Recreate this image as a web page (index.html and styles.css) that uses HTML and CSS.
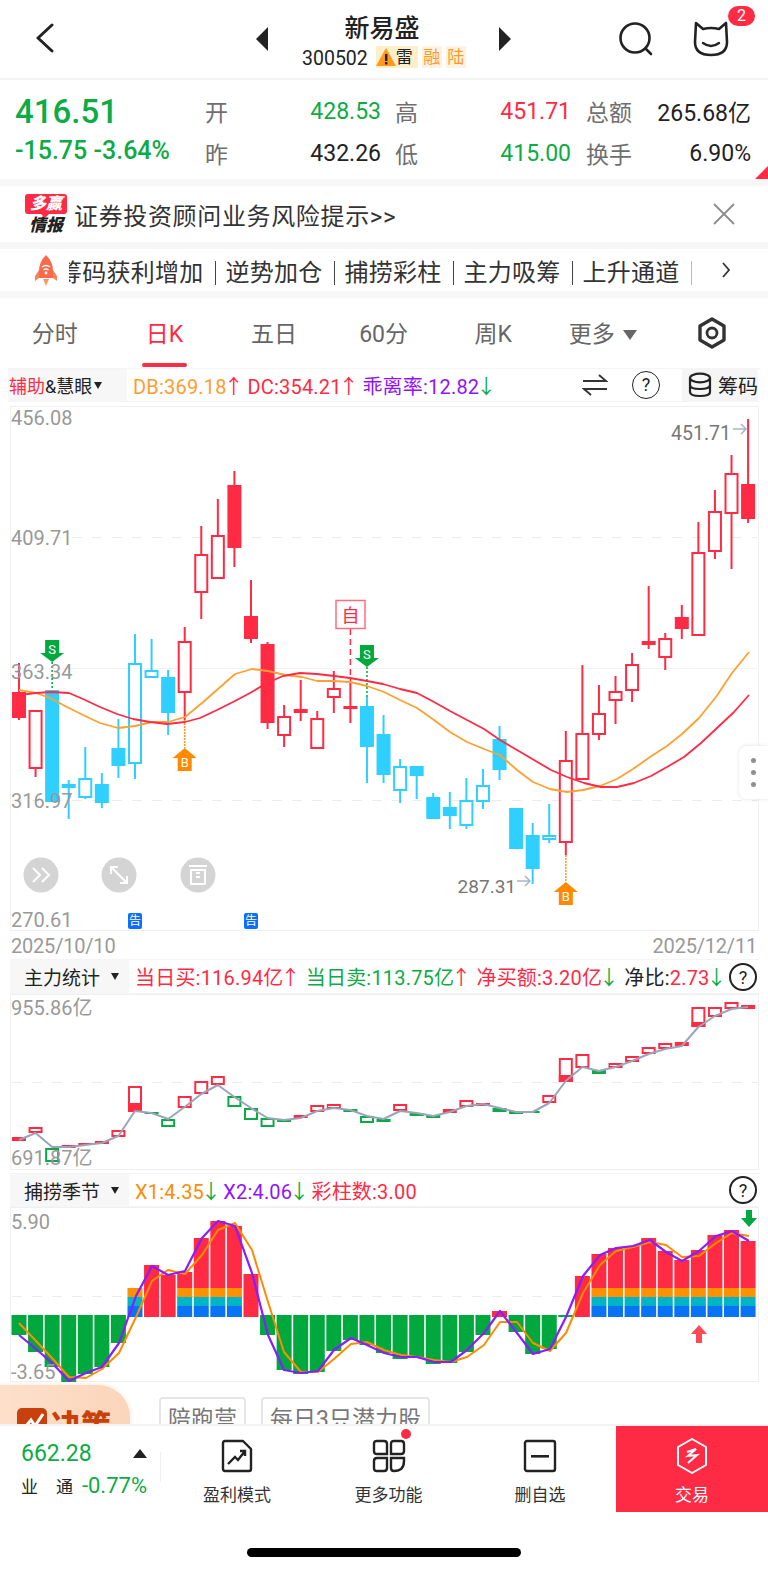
FILE: index.html
```html
<!DOCTYPE html>
<html lang="zh-CN">
<head>
    <meta charset="UTF-8">
    <meta name="viewport" content="width=device-width, initial-scale=1.0">
    <title>新易盛</title>
    <link rel="stylesheet" href="styles.css">
</head>
<body>

    <header class="top">
        <svg class="back" width="20" height="30" viewBox="0 0 20 30"><polyline points="17,2 3,15 17,28" fill="none" stroke="#222" stroke-width="3" stroke-linecap="round" stroke-linejoin="round"/></svg>
        <div class="tri tri-left"></div>
        <div class="name">
            <div class="name-title">新易盛</div>
            <div class="name-sub">
                <span class="code">300502</span>
                <span class="tag tag-warn">
                    <svg width="20" height="20" viewBox="0 0 20 20"><path d="M10 1 L20 19 L0 19 Z" fill="#ff9a1f"/><rect x="9" y="7" width="2.4" height="7" fill="#222"/><rect x="9" y="15" width="2.4" height="2.4" fill="#222"/></svg>雷
                </span>
                <span class="tag">融</span>
                <span class="tag">陆</span>
            </div>
        </div>
        <div class="tri tri-right"></div>
        <svg class="search" width="36" height="36" viewBox="0 0 36 36"><circle cx="17" cy="17" r="14.5" fill="none" stroke="#222" stroke-width="2.6"/><line x1="28" y1="28" x2="33" y2="33" stroke="#222" stroke-width="2.6" stroke-linecap="round"/></svg>
        <div class="cat">
            <svg width="36" height="36" viewBox="0 0 36 36"><path d="M3 2 L10 8 Q18 6 26 8 L33 2 L34 21 Q34 34 18 34 Q2 34 2 21 Z" fill="none" stroke="#222" stroke-width="2.6" stroke-linejoin="round"/><path d="M10 22 Q18 28 26 22" fill="none" stroke="#222" stroke-width="2.4" stroke-linecap="round"/></svg>
            <span class="badge">2</span>
        </div>
    </header>

    <section class="stats">
        <div class="price">
            <div class="price-now">416.51</div>
            <div class="price-chg">-15.75 -3.64%</div>
        </div>
        <div class="stat-grid">
            <span class="lbl">开</span><span class="val green">428.53</span>
            <span class="lbl lbl-mid">高</span><span class="val red">451.71</span>
            <span class="lbl lbl-end">总额</span><span class="val">265.68亿</span>
            <span class="lbl">昨</span><span class="val">432.26</span>
            <span class="lbl lbl-mid">低</span><span class="val green">415.00</span>
            <span class="lbl lbl-end">换手</span><span class="val">6.90%</span>
        </div>
        <div class="corner"></div>
    </section>

    <section class="banner">
        <div class="logo">
            <div class="logo-top">多赢</div>
            <div class="logo-bot">情报</div>
        </div>
        <div class="banner-text">证券投资顾问业务风险提示&gt;&gt;</div>
        <svg class="close" width="24" height="24" viewBox="0 0 24 24"><path d="M2 2 L22 22 M22 2 L2 22" stroke="#8c8c8c" stroke-width="1.8"/></svg>
    </section>

    <section class="ticker">
        <svg class="rocket" width="26" height="32" viewBox="0 0 26 32">
            <path d="M13 1 Q20 8 20 17 L20 24 L6 24 L6 17 Q6 8 13 1 Z" fill="#fa6a4a"/>
            <path d="M6 16 L2 22 L2 27 L6 24 Z M20 16 L24 22 L24 27 L20 24 Z" fill="#f7845f"/>
            <path d="M10 25 L16 25 L13 32 Z" fill="#fb9a63"/>
            <path d="M9 13 Q13 10 17 13 M10.5 16 Q13 14 15.5 16" fill="none" stroke="#fff" stroke-width="1.3"/>
            <circle cx="13" cy="19" r="1.4" fill="#fff"/>
        </svg>
        <div class="ticker-clip">
            <div class="ticker-text">筹码获利增加<i></i>逆势加仓<i></i>捕捞彩柱<i></i>主力吸筹<i></i>上升通道<i></i></div>
        </div>
        <svg class="chev" width="10" height="18" viewBox="0 0 10 18"><polyline points="2,2 8,9 2,16" fill="none" stroke="#333" stroke-width="1.8"/></svg>
    </section>

    <nav class="tabs">
        <div class="tab">分时</div>
        <div class="tab on">日K</div>
        <div class="tab">五日</div>
        <div class="tab">60分</div>
        <div class="tab">周K</div>
        <div class="tab">更多<span class="tab-arrow"></span></div>
        <div class="tab">
            <svg width="30" height="32" viewBox="0 0 30 32"><path d="M15 2 L27 9 L27 23 L15 30 L3 23 L3 9 Z" fill="none" stroke="#333" stroke-width="3.4" stroke-linejoin="round"/><circle cx="15" cy="16" r="5" fill="none" stroke="#333" stroke-width="2.8"/></svg>
        </div>
    </nav>

    <div class="ihead">
        <div class="ihead-name"><span class="red">辅助</span>&amp;慧眼<span class="mini-arrow"></span></div>
        <div class="ihead-vals">
            <span class="orange">DB:369.18<b class="red">↑</b></span>
            <span class="red">DC:354.21<b>↑</b></span>
            <span class="purple">乖离率:12.82<b class="green">↓</b></span>
        </div>
        <svg class="swap" width="26" height="24" viewBox="0 0 26 24"><path d="M1 8 L24 8 L17 2 M25 16 L2 16 L9 22" fill="none" stroke="#333" stroke-width="1.8"/></svg>
        <span class="help help-small">?</span>
        <div class="chip">
            <svg width="24" height="26" viewBox="0 0 24 26"><ellipse cx="12" cy="6" rx="10" ry="4.4" fill="none" stroke="#222" stroke-width="2.2"/><path d="M2 6 V20 Q2 24 12 24 Q22 24 22 20 V6 M2 13 Q2 17 12 17 Q22 17 22 13" fill="none" stroke="#222" stroke-width="2.2"/></svg>
            筹码
        </div>
    </div>

    <svg id="kline" class="chart" width="768" height="529" viewBox="0 402 768 529"></svg>

    <div class="dates"><span>2025/10/10</span><span>2025/12/11</span></div>

    <div class="ihead ihead-sub">
        <div class="ihead-name name-wide">主力统计<span class="mini-arrow"></span></div>
        <div class="ihead-vals">
            <span class="red">当日买:116.94亿<b>↑</b></span>
            <span class="green">当日卖:113.75亿<b class="red">↑</b></span>
            <span class="red">净买额:3.20亿<b class="green">↓</b></span>
            <span class="ink">净比:<i class="red">2.73</i><b class="green">↓</b></span>
        </div>
        <span class="help">?</span>
    </div>

    <svg id="flow" class="chart" width="768" height="176" viewBox="0 994 768 176"></svg>

    <div class="ihead ihead-sub ihead-third">
        <div class="ihead-name name-wide">捕捞季节<span class="mini-arrow"></span></div>
        <div class="ihead-vals">
            <span class="orange-deep">X1:4.35<b class="green">↓</b></span>
            <span class="purple">X2:4.06<b class="green">↓</b></span>
            <span class="red">彩柱数:3.00</span>
        </div>
        <span class="help">?</span>
    </div>

    <svg id="season" class="chart" width="768" height="175" viewBox="0 1207 768 175"></svg>

    <div class="promo">
        <div class="promo-tab">
            <svg width="30" height="30" viewBox="0 0 30 30"><rect width="30" height="30" rx="5" fill="#c8410c"/><path d="M4 24 L14 12 L18 18 L26 6" fill="none" stroke="#fff" stroke-width="3"/></svg>
            决策
        </div>
        <div class="promo-btn">陪跑营</div>
        <div class="promo-btn">每日3只潜力股</div>
    </div>

    <footer class="bar">
        <div class="index">
            <div class="index-row">
                <span class="index-val">662.28</span>
                <span class="index-up"></span>
            </div>
            <div class="index-row">
                <span class="index-name"><span>业</span><span>通</span></span>
                <span class="index-chg">-0.77%</span>
            </div>
        </div>
        <div class="tool">
            <svg width="34" height="34" viewBox="0 0 34 34"><path d="M3 4 Q3 2 5 2 L23 2 L31 10 L31 30 Q31 32 29 32 L5 32 Q3 32 3 30 Z" fill="none" stroke="#222" stroke-width="2.4" stroke-linejoin="round"/><path d="M8 25 L15 18 L18 21 L25 12 M20 12 L25 12 L25 17" fill="none" stroke="#222" stroke-width="2.4"/></svg>
            <span>盈利模式</span>
        </div>
        <div class="tool">
            <svg width="34" height="34" viewBox="0 0 34 34"><g fill="none" stroke="#222" stroke-width="2.4"><path d="M5 2 H12 Q15 2 15 5 V15 H5 Q2 15 2 12 V5 Q2 2 5 2 Z"/><path d="M22 2 H29 Q32 2 32 5 V12 Q32 15 29 15 H19 V5 Q19 2 22 2 Z"/><path d="M5 19 H15 V29 Q15 32 12 32 H5 Q2 32 2 29 V22 Q2 19 5 19 Z"/><path d="M19 19 H32 V22 Q32 32 22 32 Q19 32 19 29 Z"/></g></svg>
            <span>更多功能</span>
            <i class="dot"></i>
        </div>
        <div class="tool">
            <svg width="34" height="34" viewBox="0 0 34 34"><rect x="2" y="2" width="30" height="30" rx="2" fill="none" stroke="#222" stroke-width="2.4"/><rect x="8" y="16" width="18" height="2.6" fill="#222"/></svg>
            <span>删自选</span>
        </div>
        <div class="tool trade">
            <svg width="34" height="38" viewBox="0 0 34 38"><path d="M17 2 L31 10 L31 28 L17 36 L3 28 L3 10 Z" fill="none" stroke="#fff" stroke-width="2" stroke-linejoin="round"/><path d="M12 15 L21 12 L13 19 L22 18 L13 26" fill="none" stroke="#fff" stroke-width="2"/></svg>
            <span>交易</span>
        </div>
    </footer>

    <div class="home"><i></i></div>

    <div class="side-handle"><i></i><i></i><i></i></div>

    <script src="chart.js"></script>
</body>
</html>
```

FILE: styles.css
```css
body {
    font-family: Roboto, "Noto Sans CJK SC", sans-serif;
    margin: 0;
    padding: 0;
    width: 768px;
    height: 1572px;
    overflow: hidden;
    position: relative;
    background-color: white;
    color: #222;
}
.red { color: #ff2a44; }
.green { color: #0dab45; }
.orange { color: #ff9d2e; }
.orange-deep { color: #ff8c00; }
.purple { color: #9013fe; }
.ink { color: #222; }
i { font-style: normal; }

/* top bar */
.top {
    height: 78px;
    border-bottom: 2px solid #f3f3f3;
    display: flex;
    align-items: center;
    padding-left: 35px;
}
.back { margin-top: -2px; }
.tri {
    width: 0;
    height: 0;
    border-top: 12px solid transparent;
    border-bottom: 12px solid transparent;
}
.tri-left { border-right: 12px solid #222; margin-left: 201px; }
.tri-right { border-left: 12px solid #222; margin-left: 3px; }
.name {
    width: 228px;
    align-self: flex-start;
    text-align: center;
}
.name-title {
    font-size: 25px;
    line-height: 30px;
    font-weight: 500;
    margin-top: 14px;
}
.name-sub {
    display: flex;
    align-items: center;
    gap: 4px;
    height: 24px;
    margin-top: 1px;
    padding-left: 34px;
}
.code {
    font-size: 19.5px;
    margin-right: 4px;
    padding-top: 3px;
}
.tag {
    background-color: #fff2e4;
    color: #ff9a1f;
    font-size: 17px;
    line-height: 22px;
    width: 20px;
    text-align: center;
}
.tag-warn {
    display: flex;
    align-items: center;
    width: 42px;
    background-color: #fdefca;
    color: #222;
}
.tag-warn svg { flex: none; }
.search { margin-left: 107px; }
.cat {
    position: relative;
    margin-left: 39px;
    height: 36px;
}
.badge {
    position: absolute;
    left: 35px;
    top: -15px;
    width: 27px;
    height: 20px;
    line-height: 20px;
    border-radius: 10px;
    background-color: #ff2a44;
    color: white;
    font-size: 16px;
    text-align: center;
}

/* price block */
.stats {
    height: 99px;
    border-bottom: 7px solid #f7f7f7;
    display: flex;
    position: relative;
}
.price {
    width: 205px;
    padding-left: 15px;
    box-sizing: border-box;
    color: #0dab45;
}
.price-now {
    font-size: 33px;
    line-height: 40px;
    margin-top: 12px;
    font-weight: 500;
}
.price-chg {
    font-size: 25px;
    line-height: 30px;
    margin-top: 4px;
    font-weight: 500;
}
.stat-grid {
    display: grid;
    grid-template-columns: 105px 71px 119px 71px 70px 110px;
    grid-auto-rows: 42px;
    align-items: center;
    margin-top: 10px;
    font-size: 23px;
}
.lbl { color: #6f6f6f; }
.lbl-mid { margin-left: 14px; }
.lbl-end { margin-left: 15px; white-space: nowrap; }
.val { text-align: right; white-space: nowrap; }
.corner {
    position: absolute;
    right: 0;
    bottom: 0;
    border-left: 13px solid transparent;
    border-bottom: 13px solid #ff2a44;
}

/* banner */
.banner {
    height: 56px;
    border-bottom: 7px solid #f7f7f7;
    display: flex;
    align-items: center;
    padding-left: 25px;
}
.logo {
    width: 42px;
    text-align: center;
}
.logo-top {
    position: relative;
    background-color: #ff2a44;
    color: white;
    font-size: 16px;
    line-height: 20px;
    font-weight: 900;
    font-style: italic;
    border-radius: 3px;
    margin-bottom: 2px;
}
.logo-top::after {
    content: "";
    position: absolute;
    left: 16px;
    top: 20px;
    border-left: 4px solid transparent;
    border-right: 4px solid transparent;
    border-top: 4px solid #ff2a44;
}
.logo-bot {
    font-size: 17px;
    line-height: 18px;
    font-weight: 900;
    font-style: italic;
    color: #222;
}
.banner-text {
    margin-left: 7px;
    font-size: 24px;
    letter-spacing: 0.65px;
    color: #333;
    width: 638px;
    white-space: nowrap;
}

/* ticker */
.ticker {
    height: 42px;
    border-bottom: 7px solid #f7f7f7;
    display: flex;
    align-items: center;
    padding-left: 33px;
}
.ticker-clip {
    width: 634px;
    margin-left: 10px;
    overflow: hidden;
}
.ticker-text {
    margin-left: -11px;
    font-size: 24px;
    letter-spacing: 0.25px;
    color: #333;
    white-space: nowrap;
}
.ticker-text i {
    display: inline-block;
    width: 1px;
    height: 24px;
    background-color: #444;
    margin: 0 10px 0 11px;
    vertical-align: -4px;
}
.ticker-text i:last-child { background-color: #bbb; }
.chev { margin-left: 18px; }

/* tabs */
.tabs {
    height: 70px;
    display: grid;
    grid-template-columns: repeat(7, 109.6px);
    align-items: center;
    font-size: 23px;
    color: #666;
}
.tab {
    text-align: center;
    position: relative;
    line-height: 74px;
    height: 70px;
}
.tab svg { vertical-align: middle; margin-top: -6px; }
.tab.on { color: #ff2a44; }
.tab.on::after {
    content: "";
    position: absolute;
    left: 32px;
    width: 45px;
    bottom: 1px;
    height: 4px;
    border-radius: 2px;
    background-color: #ff2a44;
}
.tab-arrow {
    display: inline-block;
    margin-left: 8px;
    border-left: 7px solid transparent;
    border-right: 7px solid transparent;
    border-top: 10px solid #666;
    vertical-align: 2px;
}

/* indicator heads */
.ihead {
    height: 34px;
    margin-left: 8px;
    width: 752px;
    display: flex;
    align-items: center;
    font-size: 20px;
    border-top: 1px solid #f5f5f5;
    border-bottom: 1px solid #f5f5f5;
    box-sizing: border-box;
    white-space: nowrap;
}
.ihead-name {
    width: 119px;
    height: 100%;
    flex: none;
    background-color: #f7f7f7;
    display: flex;
    align-items: center;
    font-size: 18px;
    padding-left: 1px;
    box-sizing: border-box;
}
.name-wide {
    padding-left: 14px;
    font-size: 19px;
}
.mini-arrow {
    margin-left: 2px;
    border-left: 4px solid transparent;
    border-right: 4px solid transparent;
    border-top: 7px solid #222;
}
.name-wide .mini-arrow { margin-left: 11px; }
.ihead-vals {
    display: flex;
    gap: 6.5px;
    margin-left: 6px;
    letter-spacing: 0.2px;
}
.ihead-sub .ihead-vals { gap: 8px; }
.ihead-third .ihead-vals { gap: 5px; }
.ihead-vals b {
    font-weight: 400;
    margin: 0 -3px 0 -3px;
}
.swap { position: absolute; left: 582px; }
.help {
    flex: none;
    margin-left: auto;
    width: 28px;
    height: 28px;
    border: 2px solid #222;
    border-radius: 50%;
    box-sizing: border-box;
    text-align: center;
    font-size: 18px;
    line-height: 25px;
    margin-right: 3px;
}
.help-small {
    position: absolute;
    left: 632px;
    margin: 0;
    border-width: 1.5px;
}
.chip {
    position: absolute;
    left: 682px;
    width: 76px;
    height: 32px;
    background-color: #f5f5f5;
    display: flex;
    align-items: center;
    gap: 6px;
    font-size: 20px;
    padding-left: 6px;
    box-sizing: border-box;
}
.ihead-sub { height: 35px; margin-left: 10px; width: 750px; }
.ihead-third { margin-top: 3px; height: 34px; }

.chart { display: block; }
.chart text { font-family: Roboto, "Noto Sans CJK SC", sans-serif; }

.dates {
    height: 28px;
    line-height: 30px;
    display: flex;
    justify-content: space-between;
    padding: 0 11px;
    font-size: 20px;
    letter-spacing: -0.2px;
    color: #999;
}

/* promo */
.promo {
    height: 42px;
    overflow: hidden;
    display: flex;
    align-items: flex-start;
    position: relative;
}
.promo-tab {
    width: 130px;
    height: 60px;
    margin-top: 3px;
    box-sizing: border-box;
    padding: 23px 0 0 17px;
    background: linear-gradient(to right, #fde0cb, #fbd5ba);
    border-top-right-radius: 32px;
    box-shadow: 0 0 6px #fde9d8;
    color: #c8410c;
    font-size: 30px;
    font-weight: 900;
    line-height: 36px;
    display: flex;
    gap: 4px;
    flex: none;
}
.promo-btn {
    margin-top: 15px;
    margin-left: 29px;
    height: 44px;
    padding: 0 7px;
    border: 2px solid #e5e5e5;
    border-radius: 4px;
    font-size: 23px;
    line-height: 42px;
    color: #777;
}
.promo-btn + .promo-btn { margin-left: 15px; }

/* bottom bar */
.bar {
    height: 88px;
    border-top: 2px solid #f3f3f3;
    box-sizing: border-box;
    display: grid;
    grid-template-columns: 161px 152px 151px 152px 152px;
    background-color: white;
    position: relative;
}
.index {
    padding: 13px 0 0 21px;
    position: relative;
}
.index::after {
    content: "";
    position: absolute;
    right: 0;
    top: 26px;
    width: 1px;
    height: 30px;
    background-color: #efefef;
}
.index-row {
    display: flex;
    align-items: center;
    justify-content: space-between;
    width: 126px;
    height: 28px;
    margin-bottom: 4px;
}
.index-val { font-size: 23px; color: #0dab45; }
.index-up {
    border-left: 7px solid transparent;
    border-right: 7px solid transparent;
    border-bottom: 9px solid #222;
}
.index-name {
    display: flex;
    gap: 18px;
    font-size: 17px;
    color: #222;
    width: 46px;
}
.index-chg { font-size: 22px; color: #0dab45; }
.tool {
    position: relative;
    display: flex;
    flex-direction: column;
    align-items: center;
    padding-top: 13px;
    box-sizing: border-box;
    font-size: 17px;
    color: #333;
    gap: 8px;
}
.dot {
    position: absolute;
    left: 88px;
    top: 3px;
    width: 10px;
    height: 10px;
    border-radius: 50%;
    background-color: #ff2a44;
}
.trade {
    background-color: #ff2a44;
    color: white;
    padding-top: 11px;
    gap: 6px;
}

.home {
    height: 60px;
    display: flex;
    justify-content: center;
    padding-top: 36px;
    box-sizing: border-box;
}
.home i {
    display: block;
    width: 274px;
    height: 9px;
    border-radius: 5px;
    background-color: black;
}

.side-handle {
    position: absolute;
    right: 0;
    top: 746px;
    width: 29px;
    height: 53px;
    background-color: white;
    border-radius: 8px 0 0 8px;
    box-shadow: 0 0 4px rgba(0, 0, 0, 0.12);
    display: flex;
    flex-direction: column;
    align-items: center;
    justify-content: center;
    gap: 7px;
}
.side-handle i {
    display: block;
    width: 5px;
    height: 5px;
    border-radius: 50%;
    background-color: #8e8e8e;
}
```

FILE: chart.js
```js
const RED = "#ff2a44", BLUE = "#2fd0ff", GREEN = "#0aab46", BAR_GREEN = "#00a83e";
const X0 = 19, STEP = 16.57;

function cx(i) { return X0 + STEP * i; }
function line(x1, y1, x2, y2, color, extra) {
    return `<line x1="${x1}" y1="${y1}" x2="${x2}" y2="${y2}" stroke="${color}" ${extra || 'stroke-width="2"'}/>`;
}
function rect(x, y, w, h, fill) { return `<rect x="${x}" y="${y}" width="${w}" height="${h}" fill="${fill}"/>`; }
function box(x, y, w, h, color) {
    return `<rect x="${x + 1}" y="${y + 1}" width="${w - 2}" height="${Math.max(h - 2, 1)}" fill="white" stroke="${color}" stroke-width="2"/>`;
}
function label(x, y, txt, color, anchor, size) {
    return `<text x="${x}" y="${y}" fill="${color}" font-size="${size || 20}" text-anchor="${anchor || "start"}" dominant-baseline="central">${txt}</text>`;
}
function poly(points, color, w) {
    return `<polyline points="${points.map(p => p.join(",")).join(" ")}" fill="none" stroke="${color}" stroke-width="${w}" stroke-linejoin="round"/>`;
}
function frame(top, bottom) {
    return `<rect x="10.5" y="${top + 0.5}" width="748" height="${bottom - top - 1}" fill="none" stroke="#f0f0f0"/>`;
}
function dash(y) { return line(12, y, 757, y, "#ececec", 'stroke-dasharray="10 10"'); }

/* ---- K line: high, body top, body bottom, low, color, filled ---- */
let candles = [
    [663, 692, 718, 720, RED, 1], [710, 710, 769, 777, RED, 0], [690, 690, 802, 802, BLUE, 1], [780, 784, 788, 819, BLUE, 0],
    [747, 778, 798, 799, BLUE, 0], [773, 784, 803, 808, BLUE, 1], [719, 748, 766, 778, BLUE, 1], [634, 663, 764, 779, BLUE, 0],
    [639, 670, 678, 678, BLUE, 0], [670, 677, 713, 735, BLUE, 1], [627, 641, 693, 720, RED, 0], [526, 554, 593, 619, RED, 0],
    [499, 535, 579, 579, RED, 0], [471, 485, 548, 567, RED, 1], [580, 616, 639, 643, RED, 1], [642, 644, 723, 729, RED, 1],
    [705, 716, 736, 747, RED, 0], [680, 709, 713, 721, RED, 1], [711, 718, 749, 749, RED, 0], [671, 688, 698, 713, RED, 0],
    [681, 706, 709, 723, RED, 1], [697, 706, 747, 783, BLUE, 1], [715, 734, 775, 783, BLUE, 1], [759, 766, 791, 803, BLUE, 0],
    [766, 766, 776, 799, BLUE, 1], [793, 797, 819, 819, BLUE, 1], [792, 807, 816, 829, BLUE, 1], [778, 800, 826, 829, BLUE, 0],
    [769, 785, 802, 809, BLUE, 0], [726, 739, 770, 780, BLUE, 1], [808, 808, 849, 849, BLUE, 1], [823, 835, 869, 884, BLUE, 1],
    [804, 835, 840, 843, BLUE, 0], [731, 760, 843, 855, RED, 0], [665, 733, 780, 780, RED, 0], [685, 713, 735, 740, RED, 0],
    [676, 691, 701, 724, RED, 0], [653, 664, 691, 702, RED, 0], [586, 641, 645, 649, RED, 0], [633, 638, 658, 670, RED, 0],
    [605, 617, 629, 639, RED, 1], [522, 552, 636, 636, RED, 0], [490, 511, 552, 559, RED, 0], [455, 473, 514, 569, RED, 0],
    [419, 484, 519, 523, RED, 1]
];

let maRed = [[19,695],[36,693],[52,692],[69,693],[83,699],[100,707],[117,714],[133,719],[150,722],[167,724],[185,722],[200,718],[217,710],[233,702],[250,693],[267,683],[283,676],[300,673],[317,674],[334,676],[350,678],[367,681],[383,684],[400,689],[417,693],[434,702],[450,711],[467,720],[484,729],[500,740],[517,750],[534,760],[551,770],[567,777],[584,783],[601,787],[617,787],[634,783],[651,776],[667,767],[684,757],[701,743],[717,728],[734,712],[749,695]];
let maOrange = [[19,690],[36,693],[50,698],[67,707],[83,715],[100,723],[118,728],[135,726],[152,722],[168,722],[185,717],[202,703],[218,689],[235,674],[252,669],[268,671],[285,675],[302,677],[317,681],[333,681],[350,682],[367,686],[384,692],[400,700],[417,708],[434,720],[450,732],[467,742],[484,749],[500,755],[517,770],[533,782],[550,789],[567,792],[583,790],[600,786],[617,779],[633,769],[650,757],[667,746],[682,734],[699,718],[716,697],[732,673],[749,652]];

function flagS(x, top) {
    return `<path d="M${x - 7} ${top} H${x + 7} V${top + 13} H${x + 12} L${x} ${top + 22} L${x - 12} ${top + 13} H${x - 7} Z" fill="${BAR_GREEN}"/>` +
        `<text x="${x}" y="${top + 9}" fill="white" font-size="13" text-anchor="middle" dominant-baseline="central">S</text>`;
}
function flagB(x, top) {
    return `<path d="M${x} ${top} L${x + 12} ${top + 10} H${x + 7} V${top + 23} H${x - 7} V${top + 10} H${x - 12} Z" fill="#ff8a00"/>` +
        `<text x="${x}" y="${top + 14}" fill="white" font-size="13" text-anchor="middle" dominant-baseline="central">B</text>`;
}
function roundBtn(x, inner) {
    return `<circle cx="${x}" cy="875" r="17.5" fill="#d4d4d4"/><g fill="none" stroke="white" stroke-width="2">${inner}</g>`;
}
function notice(x) {
    return `<rect x="${x}" y="913" width="14" height="16" rx="2" fill="#0c6eff"/><text x="${x + 7}" y="921" fill="white" font-size="12" text-anchor="middle" dominant-baseline="central">告</text>`;
}

let k = frame(406, 931);
k += line(12, 668.5, 757, 668.5, "#f2f2f2", 'stroke-width="1"') + dash(537.5) + dash(800.5);
k += line(cx(2), 662, cx(2), 690, BAR_GREEN, 'stroke-width="1.5" stroke-dasharray="2 2"');
k += line(cx(21), 667, cx(21), 697, BAR_GREEN, 'stroke-width="1.5" stroke-dasharray="2 2"');
k += line(cx(10), 720, cx(10), 748, "#ff9a1f", 'stroke-width="1.5" stroke-dasharray="2 1"');
k += line(cx(33), 855, cx(33), 882, "#ff9a1f", 'stroke-width="1.5" stroke-dasharray="2 1"');
k += line(cx(20), 629, cx(20), 681, RED, 'stroke-width="1.5" stroke-dasharray="6 4"');
candles.forEach(([hi, top, bottom, lo, color, filled], i) => {
    let x = cx(i);
    k += line(x, hi, x, lo, color);
    k += filled ? rect(x - 7, top, 14, bottom - top, color) : box(x - 7, top, 14, bottom - top, color);
});
k += poly(maOrange, "#ffa030", 1.8) + poly(maRed, RED, 1.8);
k += label(11, 418, "456.08", "#999") + label(11, 538, "409.71", "#999") + label(11, 672, "363.34", "#999");
k += label(11, 801, "316.97", "#999") + label(11, 920, "270.61", "#999");
k += label(731, 433, "451.71", "#777", "end", 19.5) + label(516, 886, "287.31", "#777", "end", 19);
k += `<path d="M733 429 H746 M741 424 L746 429 L741 434" fill="none" stroke="#a8b4c8" stroke-width="1.5"/>`;
k += `<path d="M517 881 H530 M525 876 L530 881 L525 886" fill="none" stroke="#a8b4c8" stroke-width="1.5"/>`;
k += flagS(cx(2), 640) + flagS(cx(21), 645) + flagB(cx(10), 748) + flagB(cx(33), 882);
k += `<rect x="336" y="600.5" width="29" height="28" fill="white" stroke="#ff6e7e" stroke-width="1.5"/><text x="350.5" y="615" fill="${RED}" font-size="18" text-anchor="middle" dominant-baseline="central">自</text>`;
k += roundBtn(41, `<path d="M33 868 L40 875 L33 882 M42 868 L49 875 L42 882"/>`);
k += roundBtn(119, `<path d="M111 867 L127 883 M111 874 V867 H118 M127 876 V883 H120"/>`);
k += roundBtn(198, `<path d="M189 866 H207 M191 870 V884 H205 V870 Z M196 873 H200 M196 877 H200"/>`);
k += notice(128) + notice(244);
document.getElementById("kline").innerHTML = k;

/* ---- capital flow: top, bottom, color, filled part starts at (0 = all hollow, 1 = all filled) ---- */
let flows = [
    [1137, 1141, RED, 1], [1127, 1133, RED, 0], [1148, 1162, GREEN, 0], [1145, 1147, RED, 0], [1143, 1145, RED, 1], [1141, 1144, RED, 0], [1130, 1137, RED, 0],
    [1086, 1112, RED, 1103], [1112, 1114, GREEN, 1], [1119, 1127, GREEN, 0], [1096, 1108, RED, 0], [1081, 1094, RED, 0], [1076, 1085, RED, 0], [1096, 1107, GREEN, 0],
    [1108, 1120, GREEN, 0], [1118, 1127, GREEN, 0], [1119, 1122, GREEN, 1], [1115, 1118, RED, 1], [1105, 1112, RED, 0], [1104, 1109, RED, 0], [1109, 1112, GREEN, 1],
    [1116, 1123, GREEN, 0], [1119, 1122, GREEN, 1], [1104, 1111, RED, 0], [1113, 1116, GREEN, 1], [1115, 1118, GREEN, 1], [1109, 1113, RED, 0], [1100, 1107, RED, 0],
    [1103, 1106, RED, 1], [1108, 1112, GREEN, 0], [1111, 1114, GREEN, 1], [1111, 1113, GREEN, 1], [1095, 1103, RED, 0], [1058, 1082, RED, 1075], [1054, 1068, RED, 0],
    [1070, 1074, GREEN, 0], [1063, 1068, RED, 0], [1056, 1062, RED, 0], [1047, 1054, RED, 0], [1043, 1049, RED, 0], [1042, 1046, RED, 0], [1007, 1027, RED, 1022],
    [1007, 1017, RED, 0], [1002, 1009, RED, 0], [1005, 1009, RED, 1007]
];
let flowLine = [1140,1133,1147,1147,1145,1143,1136,1111,1113,1119,1107,1094,1085,1097,1108,1118,1120,1118,1111,1108,1110,1116,1119,1111,1113,1116,1112,1106,1104,1108,1112,1112,1103,1081,1067,1071,1067,1061,1054,1049,1046,1027,1016,1009,1007];

let f = frame(994, 1170) + dash(1082.5);
flows.forEach(([top, bottom, color, fill], i) => {
    let x = cx(i) - 7;
    if (fill === 1) {
        f += rect(x, top, 14, bottom - top, color);
    } else {
        f += box(x, top, 14, bottom - top, color);
        if (fill > 1) f += rect(x, fill, 14, bottom - fill, color);
    }
});
f += poly(flowLine.map((y, i) => [cx(i), y]), "#9aa5b8", 2);
f += label(11, 1008, "955.86亿", "#999") + label(11, 1158, "691.87亿", "#999");
document.getElementById("flow").innerHTML = f;

/* ---- season bars: bar top (above zero) or bottom (below zero), m = has colour bands ---- */
const ZERO = 1316;
let seasons = [1335,1352,1367,1382,1374,1367,1343,-1288,-1265,-1275,-1272,-1238,-1221,-1226,-1274,1335,1370,1374,1372,1351,1340,1345,1353,1359,1358,1364,1363,1352,1335,-1311,1332,1354,1349,1317,-1276,-1254,-1248,-1246,-1238,-1251,-1260,-1250,-1235,-1230,-1241];
let bands = [7, 10, 11, 12, 13, 35, 36, 37, 38, 39, 40, 41, 42, 43, 44];

let sxPurple = [[19,1335],[36,1349],[52,1363],[69,1381],[86,1373],[102,1367],[119,1343],[136,1296],[152,1266],[168,1275],[185,1271],[202,1238],[218,1221],[235,1226],[252,1273],[268,1335],[284,1370],[301,1373],[318,1371],[334,1350],[351,1338],[367,1345],[384,1353],[401,1357],[417,1357],[434,1362],[451,1362],[467,1350],[484,1333],[500,1311],[517,1333],[533,1354],[550,1349],[566,1317],[583,1276],[600,1255],[616,1248],[633,1246],[650,1240],[666,1252],[682,1261],[699,1251],[716,1236],[732,1231],[749,1241]];
let sxOrange = [[19,1323],[36,1341],[52,1358],[69,1377],[86,1378],[102,1369],[119,1353],[136,1317],[152,1281],[168,1270],[185,1274],[202,1255],[218,1230],[235,1223],[252,1250],[268,1302],[284,1352],[301,1372],[318,1372],[334,1359],[351,1344],[367,1342],[384,1350],[401,1355],[417,1357],[434,1360],[451,1362],[467,1357],[484,1345],[500,1322],[517,1322],[533,1343],[550,1351],[566,1333],[583,1293],[600,1265],[616,1251],[633,1247],[650,1242],[666,1245],[682,1257],[699,1256],[716,1243],[732,1233],[749,1236]];

let s = frame(1207, 1382) + dash(1296.5);
seasons.forEach((v, i) => {
    let x = cx(i) - 7.5, w = 15;
    if (v > 0) {
        s += rect(x, ZERO - 1, w, v - ZERO + 1, BAR_GREEN);
    } else {
        let top = -v;
        if (bands.includes(i)) {
            if (top < 1288) s += rect(x, top, w, 1288 - top, RED);
            s += rect(x, 1288, w, 9, "#ff9000") + rect(x, 1297, w, 9, "#00b4c8") + rect(x, 1306, w, 11, "#0a72f5");
        } else {
            s += rect(x, top, w, ZERO + 1 - top, RED);
        }
    }
});
s += poly(sxOrange, "#ff8c00", 2) + poly(sxPurple, "#8a1cff", 2.2);
s += label(11, 1222, "5.90", "#999") + label(11, 1372, "-3.65", "#999");
s += `<path d="M746 1210 H752 V1218 H757 L749 1227 L741 1218 H746 Z" fill="${BAR_GREEN}"/>`;
s += `<path d="M699 1325 L707 1334 H702 V1343 H696 V1334 H691 Z" fill="#ff4a55"/>`;
document.getElementById("season").innerHTML = s;
```
